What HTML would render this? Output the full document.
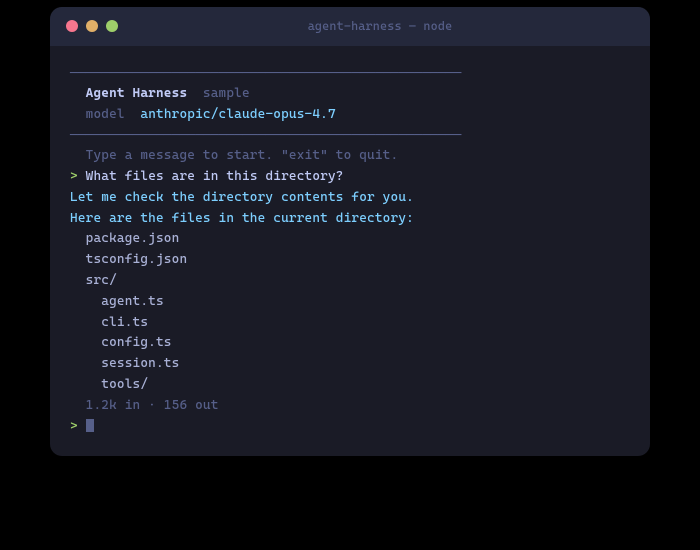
<!DOCTYPE html>
<html>
<head>
<meta charset="utf-8">
<style>
html,body{margin:0;padding:0;background:#000;width:700px;height:550px;overflow:hidden}
#win{position:absolute;left:50px;top:7px;width:600px;height:449px;background:#1a1b26;border-radius:12px;overflow:hidden}
#bar{position:absolute;left:0;top:0;width:600px;height:39px;background:#24283b}
.dot{position:absolute;top:13px;width:12px;height:12px;border-radius:50%}
#title{position:absolute;left:30px;top:0;width:600px;height:39px;text-align:center;font:12px/39px "Cascadia Code",monospace;letter-spacing:.2px;color:#565f89;font-variant-ligatures:none}
#term{position:absolute;left:20px;top:56px;font:13px/20.8px "Cascadia Code",monospace;letter-spacing:.2px;color:#a9b1d6;white-space:pre;font-variant-ligatures:none}
.l{height:20.8px}
.d{color:#565f89}
.b{color:#7dcfff}
.g{color:#9ece6a}
.h{color:#c0caf5;font-weight:bold}
.r{color:#565f89;font-family:"DejaVu Sans Mono",monospace;letter-spacing:0;position:relative;top:1px}
.c{display:inline-block;width:8px;height:13px;background:#565f89;vertical-align:-2px}
</style>
</head>
<body>
<div id="win"><div id="bar"></div><div class="dot" style="left:16px;background:#f7768e"></div><div class="dot" style="left:36px;background:#e0af68"></div><div class="dot" style="left:56px;background:#9ece6a"></div><div id="title">agent-harness — node</div><div id="term"><div class="l r">──────────────────────────────────────────────────</div><div class="l">  <span class="h">Agent Harness</span>  <span class="d">sample</span></div><div class="l">  <span class="d">model</span>  <span class="b">anthropic/claude-opus-4.7</span></div><div class="l r">──────────────────────────────────────────────────</div><div class="l d">  Type a message to start. "exit" to quit.</div><div class="l"><span class="g">&gt;</span> <span style="color:#c0caf5">What files are in this directory?</span></div><div class="l b">Let me check the directory contents for you.</div><div class="l b">Here are the files in the current directory:</div><div class="l">  package.json</div><div class="l">  tsconfig.json</div><div class="l">  src/</div><div class="l">    agent.ts</div><div class="l">    cli.ts</div><div class="l">    config.ts</div><div class="l">    session.ts</div><div class="l">    tools/</div><div class="l d">  1.2k in · 156 out</div><div class="l"><span class="g">&gt;</span> <span class="c"></span></div></div></div>
</body>
</html>
